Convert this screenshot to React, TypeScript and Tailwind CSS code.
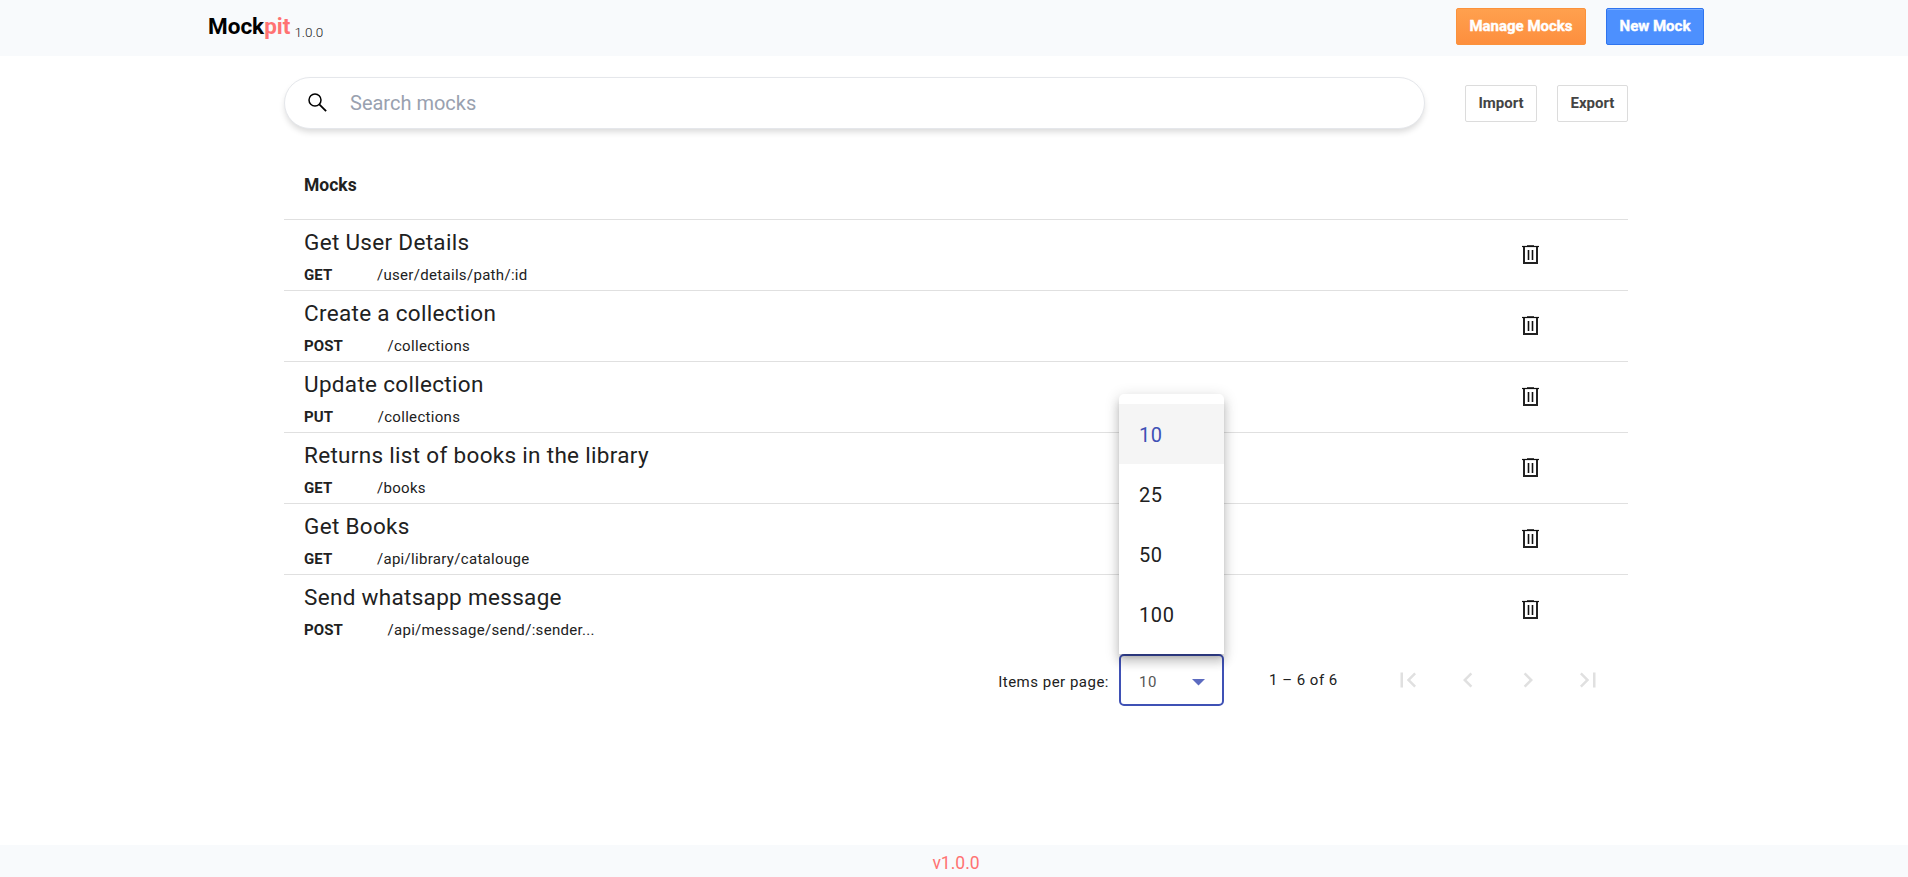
import React from "react";

type Mock = { name: string; method: string; path: string };

const mocks: Mock[] = [
  { name: "Get User Details", method: "GET", path: "/user/details/path/:id" },
  { name: "Create a collection", method: "POST", path: "/collections" },
  { name: "Update collection", method: "PUT", path: "/collections" },
  { name: "Returns list of books in the library", method: "GET", path: "/books" },
  { name: "Get Books", method: "GET", path: "/api/library/catalouge" },
  { name: "Send whatsapp message", method: "POST", path: "/api/message/send/:sender..." },
];

const pageSizes = [10, 25, 50, 100];

function TrashIcon() {
  return (
    <svg width="24" height="24" viewBox="0 0 24 24" fill="none">
      <path d="M3 4.500h17" stroke="#111" strokeWidth="1.200" />
      <path d="M8 3.500h7" stroke="#444" />
      <path d="M5 5v16h13V5" stroke="#222" strokeWidth="2" />
      <path d="M9.500 8v10M13.500 8v10" stroke="#111" strokeWidth="1.600" />
    </svg>
  );
}

function PagerIcon({ d }: { d: string }) {
  return (
    <button className="flex h-12 w-[60px] items-center justify-center">
      <svg width="30" height="30" viewBox="0 0 24 24" fill="#e0e0e0">
        <path d={d} />
      </svg>
    </button>
  );
}

function Header() {
  return (
    <header className="flex h-14 justify-between bg-slate-50 pr-[204px] pl-[208px]">
      <div className="flex items-baseline pt-[10px]">
        <h1 className="text-[22.5px] leading-8 font-bold text-black">
          Mock<span className="text-[#ff7272]">pit</span>
        </h1>
        <span className="ml-[4px] translate-y-[3px] text-[13.5px] font-light text-[#222]">1.0.0</span>
      </div>
      <div className="flex gap-5 pt-2">
        <button className="h-[37px] w-[130px] rounded-xs border border-[#fb923c] bg-linear-to-b from-[#ffa04e] to-[#fd8f3e] text-[15px] font-bold text-white [-webkit-text-stroke:0.4px_white]">
          Manage Mocks
        </button>
        <button className="h-[37px] w-[98px] rounded-xs border border-[#2f74ee] bg-[#4d90fe] text-[15px] font-bold text-white shadow-[inset_0_1px_0_#7badff] [-webkit-text-stroke:0.4px_white]">
          New Mock
        </button>
      </div>
    </header>
  );
}

function Toolbar() {
  return (
    <div className="flex pt-[21px]">
      <div className="flex h-[52px] w-[1141px] items-center rounded-full border border-gray-200 bg-white pl-[22px] shadow-[0_4px_6px_-1px_rgba(0,0,0,0.15)]">
        <svg width="22" height="22" viewBox="0 0 22 22" fill="none" stroke="#000" strokeWidth="1.500">
          <circle cx="8" cy="8" r="6" />
          <path d="M12.300 12.300l6.800 6.800" strokeWidth="1.800" />
        </svg>
        <span className="ml-[21px] text-[20px] text-gray-400">Search mocks</span>
      </div>
      <div className="flex gap-5 pt-2 pl-10">
        <button className="h-[37px] w-[72px] rounded-xs border border-[#dcdcdc] bg-white text-[15px] font-bold text-[#444]">
          Import
        </button>
        <button className="h-[37px] w-[71px] rounded-xs border border-[#dcdcdc] bg-white text-[15px] font-bold text-[#444]">
          Export
        </button>
      </div>
    </div>
  );
}

function Row({ mock, last }: { mock: Mock; last: boolean }) {
  return (
    <div className={`flex h-[71px] justify-between pr-[85px] pl-5 ${last ? "" : "border-b border-[#e0e0e0]"}`}>
      <div>
        <div className="pt-[6px] text-[22.5px] leading-[32px] tracking-[0.3125px] whitespace-nowrap">{mock.name}</div>
        <div className="flex pt-px text-[15px] leading-[32px]">
          <span className="mr-[44.5px] font-bold tracking-[0.1px]">{mock.method}</span>
          <span className="tracking-[0.3125px]">{mock.path}</span>
        </div>
      </div>
      <div className="pt-[22px]">
        <TrashIcon />
      </div>
    </div>
  );
}

function PageSizeSelect() {
  return (
    <div className="relative h-[52px] w-[105px] rounded-[5px] border-2 border-[#3f51b5]">
      <div className="flex h-full items-center justify-between pr-[17px] pl-[18px]">
        <span className="pt-1 text-[15px] tracking-[0.5px] text-[#555]">10</span>
        <svg className="mt-1" width="13" height="7" viewBox="0 0 13 7" fill="#5c6bc0">
          <path d="M0 0h13L6.500 6.500z" />
        </svg>
      </div>
      <ul className="absolute bottom-[50px] -left-[2px] w-[105px] rounded-t-[5px] bg-white pt-[10px] pb-[10px] shadow-[0_5px_5px_-3px_rgba(0,0,0,0.2),0_8px_10px_1px_rgba(0,0,0,0.14),0_3px_14px_2px_rgba(0,0,0,0.12)]">
        {pageSizes.map((size, i) => (
          <li
            key={size}
            className={`flex h-[60px] items-center pt-px pl-5 text-[20px] tracking-[0.6px] ${i === 0 ? "bg-[#f5f5f5] text-[#3f51b5]" : "text-[#212121]"}`}
          >
            {size}
          </li>
        ))}
      </ul>
    </div>
  );
}

function Paginator() {
  return (
    <div className="flex items-center justify-end pt-2 pr-[10px] text-[15px] tracking-[0.5px]">
      <span className="mr-[10px] pt-1">Items per page:</span>
      <PageSizeSelect />
      <span className="ml-[45px] w-[109px]">1 – 6 of 6</span>
      <PagerIcon d="M18.410 16.590L13.820 12l4.590-4.590L17 6l-6 6 6 6zM6 6h2v12H6z" />
      <PagerIcon d="M15.410 7.410L14 6l-6 6 6 6 1.410-1.410L10.830 12z" />
      <PagerIcon d="M10 6L8.590 7.410 13.170 12l-4.580 4.590L10 18l6-6z" />
      <PagerIcon d="M5.590 7.410L10.180 12l-4.590 4.590L7 18l6-6-6-6zM16 6h2v12h-2z" />
    </div>
  );
}

export default function App() {
  return (
    <div className="flex h-[877px] flex-col bg-white font-['Roboto',sans-serif] text-[#212121]">
      <Header />
      <main className="ml-[284px] w-[1344px] flex-1">
        <Toolbar />
        <div className="mt-[35px] flex h-14 items-center border-b border-[#e0e0e0] pb-[13px] pl-5 text-[17.5px] font-bold">Mocks</div>
        {mocks.map((mock, i) => (
          <Row key={mock.name} mock={mock} last={i === mocks.length - 1} />
        ))}
        <Paginator />
      </main>
      <footer className="flex h-8 items-center justify-center bg-slate-50 pt-[5px] pl-[4px] text-[17.5px] text-[#ff7272]">v1.0.0</footer>
    </div>
  );
}
